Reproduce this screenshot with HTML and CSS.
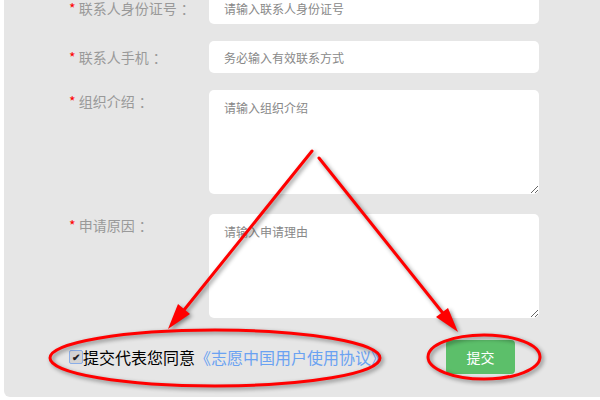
FILE: index.html
```html
<!DOCTYPE html>
<html lang="zh-CN">
<head>
    <meta charset="UTF-8">
    <meta name="viewport" content="width=device-width, initial-scale=1.0">
    <title>申请加入</title>
    <link rel="stylesheet" href="styles.css">
</head>
<body>
    <div class="panel">
        <div class="form-row">
            <label class="form-label"><span class="star">*</span> 联系人身份证号<span class="colon">：</span></label>
            <input class="form-input" type="text" placeholder="请输入联系人身份证号">
        </div>
        <div class="form-row">
            <label class="form-label"><span class="star">*</span> 联系人手机<span class="colon">：</span></label>
            <input class="form-input" type="text" placeholder="务必输入有效联系方式">
        </div>
        <div class="form-row">
            <label class="form-label form-label-top"><span class="star">*</span> 组织介绍<span class="colon">：</span></label>
            <textarea class="form-area" placeholder="请输入组织介绍"></textarea>
        </div>
        <div class="form-row form-row-last">
            <label class="form-label form-label-top"><span class="star">*</span> 申请原因<span class="colon">：</span></label>
            <textarea class="form-area" placeholder="请输入申请理由"></textarea>
        </div>

        <div class="agree-row">
            <span class="check">&#10004;</span>
            <span class="agree-text">提交代表您同意</span>
            <a class="agree-link" href="#">《志愿中国用户使用协议》</a>
            <button class="btn-submit">提交</button>
        </div>
    </div>

    <!-- annotation marks drawn over the screenshot -->
    <svg class="marks" width="600" height="400" viewBox="0 0 600 400">
        <g fill="none" stroke="#f00" stroke-width="3" stroke-linecap="round">
            <line x1="312" y1="151" x2="180" y2="315"/>
            <line x1="319" y1="158" x2="446" y2="317"/>
            <ellipse cx="215" cy="358" rx="165" ry="28"/>
            <ellipse cx="484" cy="357" rx="56" ry="22"/>
        </g>
        <g fill="#f00">
            <polygon points="168,329 178,304 190,314"/>
            <polygon points="458,332 436,317 448,308"/>
        </g>
    </svg>
</body>
</html>
```

FILE: styles.css
```css
body {
    margin: 0;
    background-color: #fff;
    font-family: "Noto Sans CJK SC", "Microsoft YaHei", sans-serif;
    overflow: hidden;
}

.panel {
    background-color: #e6e6e6;
    margin: -20px 0 0 4px;
    padding: 12px 0 23px 65px;
    border-radius: 0 0 0 6px;
}

.form-row {
    display: flex;
    align-items: flex-start;
    margin-bottom: 17px;
}

.form-row:nth-child(3) {
    margin-bottom: 20px;
}

.form-label {
    width: 140px;
    font-size: 14px;
    line-height: 32px;
    color: #999;
    white-space: nowrap;
}

.form-label-top {
    line-height: 22px;
}

.colon {
    margin-left: 4px;
}

.star {
    color: #f00;
}

.form-input,
.form-area {
    width: 330px;
    box-sizing: border-box;
    border: none;
    border-radius: 5px;
    background-color: #fff;
    font-family: inherit;
    font-size: 12px;
    color: #333;
    outline: none;
}

.form-input {
    height: 32px;
    padding: 0 15px;
}

.form-area {
    height: 104px;
    padding: 10px 15px;
    line-height: 16px;
}

.form-input::placeholder,
.form-area::placeholder {
    color: #888;
}

.agree-row {
    display: flex;
    align-items: center;
    margin-top: 22px;
    height: 34px;
}

.check {
    width: 12px;
    height: 12px;
    border: 1px solid #8aaee8;
    border-radius: 2px;
    background-color: #d4d4d4;
    color: #222;
    font-size: 10px;
    font-weight: bold;
    line-height: 12px;
    text-align: center;
    margin-top: -1px;
}

.agree-text {
    font-size: 16px;
    color: #000;
}

.agree-link {
    font-size: 16px;
    color: #6aa2f2;
    text-decoration: none;
}

.btn-submit {
    margin-left: 59px;
    width: 69px;
    height: 34px;
    border: none;
    border-radius: 4px;
    background-color: #5cbf6a;
    color: #fff;
    font-family: inherit;
    font-size: 14px;
}

.marks {
    position: absolute;
    left: 0;
    top: 0;
    filter: drop-shadow(2px 2px 2px rgba(0, 0, 0, 0.45));
}
```
